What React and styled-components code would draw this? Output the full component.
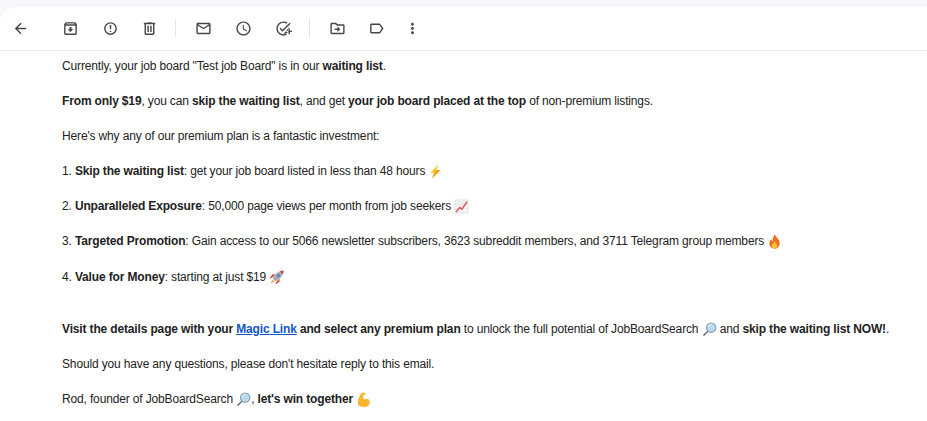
import React from 'react';
import styled, { createGlobalStyle } from 'styled-components';

const GlobalStyle = createGlobalStyle`
  html, body {
    margin: 0;
    background: #ffffff;
  }
`

const Page = styled.div`
  background: #f6f8fc;
  padding-top: 7px;
  height: 421px;
  box-sizing: border-box;
  overflow: hidden;
`
const Panel = styled.div`
  background: #ffffff;
  border-top-left-radius: 16px;
  height: 100%;
`
const Toolbar = styled.div`
  display: flex;
  align-items: center;
  height: 44px;
  padding-bottom: 1px;
  box-sizing: border-box;
  border-bottom: 1px solid #e9e9ea;
`
const IconButton = styled.div`
  width: 40px;
  height: 40px;
  display: flex;
  align-items: center;
  justify-content: center;
  flex: none;
  color: #444746;
  margin-left: ${(props) => props.$left || 0}px;
`
const Divider = styled.div`
  width: 1px;
  height: 20px;
  background: #e6e7e8;
  margin: 0 7px 0 6px;
  flex: none;
`
const Body = styled.div`
  padding: 8px 0 0 62px;
  font-family: "Liberation Sans", Arial, sans-serif;
  font-size: 12px;
  line-height: 15px;
  letter-spacing: -0.15px;
  color: #222222;
`
const Para = styled.p`
  margin: 0 0 ${(props) => props.$after || 20.1}px;
  white-space: nowrap;
`
const MagicLink = styled.a`
  color: #1155cc;
  text-decoration: underline;
`
const EmojiBox = styled.svg`
  width: 15px;
  height: 15px;
  margin: -3px 0;
  vertical-align: -1px;
`

const paths = {
  back: 'M20 11H7.83l5.59-5.59L12 4l-8 8 8 8 1.41-1.41L7.83 13H20v-2z',
  archive: 'M20.54 5.23l-1.39-1.68C18.88 3.21 18.47 3 18 3H6c-.47 0-.88.21-1.16.55L3.46 5.23C3.17 5.57 3 6.02 3 6.5V19c0 1.1.9 2 2 2h14c1.1 0 2-.9 2-2V6.5c0-.48-.17-.93-.46-1.27zM6.24 5h11.52l.81.97H5.44l.8-.97zM5 19V8h14v11H5zm8.45-9h-2.9v3H8l4 4 4-4h-2.55z',
  spam: 'M12 3a9 9 0 1 0 0 18 9 9 0 0 0 0-18zm0 2a7 7 0 1 1 0 14 7 7 0 0 1 0-14zM11 15h2v2h-2zM11 7h2v6h-2z',
  trash: 'M15 4V3H9v1H4v2h1v13c0 1.1.9 2 2 2h10c1.1 0 2-.9 2-2V6h1V4h-5zm2 15H7V6h10v13zM9 8h2v9H9zm4 0h2v9h-2z',
  mail: 'M20 4H4c-1.1 0-1.99.9-1.99 2L2 18c0 1.1.9 2 2 2h16c1.1 0 2-.9 2-2V6c0-1.1-.9-2-2-2zm0 14H4V8l8 5 8-5v10zm-8-7L4 6h16l-8 5z',
  clock: 'M11.99 2C6.47 2 2 6.48 2 12s4.47 10 9.99 10C17.52 22 22 17.52 22 12S17.52 2 11.99 2zM12 20c-4.42 0-8-3.58-8-8s3.58-8 8-8 8 3.58 8 8-3.58 8-8 8zm.5-13H11v6l5.25 3.15.75-1.23-4.5-2.67z',
  task: 'M22 5.18L10.59 16.6l-4.24-4.24 1.41-1.41 2.83 2.83 10-10L22 5.18zm-2.21 5.04c.13.57.21 1.17.21 1.78 0 4.42-3.58 8-8 8s-8-3.58-8-8 3.58-8 8-8c1.58 0 3.04.46 4.28 1.25l1.44-1.44C16.1 2.67 14.13 2 12 2 6.48 2 2 6.48 2 12s4.48 10 10 10c1.73 0 3.36-.44 4.78-1.22l-1.5-1.5c-1 .46-2.11.72-3.28.72zM19 15h-3v2h3v3h2v-3h3v-2h-3v-3h-2v3z',
  move: 'M20 6h-8l-2-2H4c-1.1 0-1.99.9-1.99 2L2 18c0 1.1.9 2 2 2h16c1.1 0 2-.9 2-2V8c0-1.1-.9-2-2-2zm0 12H4V6h5.17l2 2H20v10zm-8-4H8v-2h4V9l4 4-4 4v-3z',
  label: 'M17.63 5.84C17.27 5.33 16.67 5 16 5L5 5.01C3.9 5.01 3 5.9 3 7v10c0 1.1.9 1.99 2 1.99L16 19c.67 0 1.27-.33 1.63-.84L22 12l-4.37-6.16zM16 17H5V7h11l3.55 5L16 17z',
  more: 'M12 8c1.1 0 2-.9 2-2s-.9-2-2-2-2 .9-2 2 .9 2 2 2zm0 2c-1.1 0-2 .9-2 2s.9 2 2 2 2-.9 2-2-.9-2-2-2zm0 6c-1.1 0-2 .9-2 2s.9 2 2 2 2-.9 2-2-.9-2-2-2z',
}

function ToolIcon({ name, left }) {
  return (
    <IconButton $left={left}>
      <svg width="17" height="17" viewBox="0 0 24 24" fill="currentColor">
        <path d={paths[name]} />
      </svg>
    </IconButton>
  )
}

// 이모지 폰트가 없어서 직접 그림
function Zap() {
  return (
    <EmojiBox viewBox="0 0 16 16">
      <path d="M11 .5 2.500 9.300h4.200L4.300 15.500 13.500 6.300H8.800z" fill="#f8c62f" />
      <path d="M8.800 6.300h4.700L4.300 15.500 6.700 9.300z" fill="#f3a122" />
    </EmojiBox>
  )
}
function Chart() {
  return (
    <EmojiBox viewBox="0 0 16 16">
      <rect x="1" y="1" width="14" height="14" fill="#f1f3f4" stroke="#ced2d6" strokeWidth=".6" />
      <path d="M1 5.500h14M1 10h14M5.500 1v14M10 1v14" stroke="#dcdfe3" strokeWidth=".5" />
      <path d="M2 14 6 9l2.300 1.800L14 3" fill="none" stroke="#e0575c" strokeWidth="1.600" />
    </EmojiBox>
  )
}
function Fire() {
  return (
    <EmojiBox viewBox="0 0 16 16">
      <path d="M8.400 .3c.6 2.800 5.100 5.100 5.100 9.700 0 3.400-2.600 5.700-5.500 5.700S2.500 13.400 2.500 10.200c0-2.100 1.100-3.800 2.400-4.900 0 1.300.5 2.200 1.200 2.600C6 5.300 6.800 2.300 8.400.3z" fill="#f26c1d" />
      <path d="M8.200 7.500c.4 1.700 2.700 2.900 2.700 5.200 0 1.800-1.400 3-2.900 3s-2.900-1.200-2.900-3c0-2.100 2.500-3.100 3.100-5.200z" fill="#fbc02d" />
    </EmojiBox>
  )
}
function Rocket() {
  return (
    <EmojiBox viewBox="0 0 16 16">
      <path d="M3.500 8 .5 9.500l2.900-4.600 3.400-.4zM8 12.500 6.500 15.500l4.600-2.900.4-3.400z" fill="#d13f36" />
      <path d="M4 9.300C5.800 4.300 10 1 15.500.5 15 6 11.700 10.200 6.700 12z" fill="#a5aeb6" />
      <path d="M11.500 1.300 15.500.5c0 1.500-.3 2.900-.8 4.200z" fill="#d13f36" />
      <circle cx="10" cy="6" r="1.700" fill="#4f86c6" />
      <path d="M3.700 10.300 5.700 12.300 1.500 14.500z" fill="#f59e2c" />
    </EmojiBox>
  )
}
function Magnifier() {
  return (
    <EmojiBox viewBox="0 0 16 16">
      <path d="M6.800 8.600 1 13.800l1.200 1.200L7.600 9.600z" fill="#5f666b" />
      <circle cx="9.800" cy="6" r="5" fill="#b5dcf1" stroke="#939ca2" strokeWidth="1.200" />
      <path d="M6.800 5c.5-1.400 1.700-2.200 3.200-2.200" fill="none" stroke="#eef8fd" strokeWidth="1" />
    </EmojiBox>
  )
}
function Muscle() {
  return (
    <EmojiBox viewBox="0 0 16 16">
      <path d="M5.800 1 9.200.5l1.200 1.500-1.800 1.800-.9-.2c-.3 2 0 3.400.6 4.600 1.700-1.400 4.600-1.300 5.800.6 1.100 1.800.6 4.800-1.400 6.100-2.500 1.500-7.500 1.300-10-.5C.5 11.500 3 5 5.800 1z" fill="#f9b52d" />
      <path d="M8.200 8.200c.9.600 1.400 1.300 1.600 2.300" fill="none" stroke="#e28f16" strokeWidth=".8" />
    </EmojiBox>
  )
}

export default function App() {
  return (
    <>
      <GlobalStyle />
      <Page>
        <Panel>
          <Toolbar>
            <ToolIcon name="back" />
            <ToolIcon name="archive" left={10} />
            <ToolIcon name="spam" />
            <ToolIcon name="trash" left={-1} />
            <Divider />
            <ToolIcon name="mail" />
            <ToolIcon name="clock" />
            <ToolIcon name="task" />
            <Divider />
            <ToolIcon name="move" />
            <ToolIcon name="label" left={-1} />
            <ToolIcon name="more" left={-4} />
          </Toolbar>
          <Body>
            <Para>Currently, your job board "Test job Board" is in our <b>waiting list</b>.</Para>
            <Para><b>From only $19</b>, you can <b>skip the waiting list</b>, and get <b>your job board placed at the top</b> of non-premium listings.</Para>
            <Para>Here's why any of our premium plan is a fantastic investment:</Para>
            <Para>1. <b>Skip the waiting list</b>: get your job board listed in less than 48 hours <Zap /></Para>
            <Para>2. <b>Unparalleled Exposure</b>: 50,000 page views per month from job seekers <Chart /></Para>
            <Para>3. <b>Targeted Promotion</b>: Gain access to our 5066 newsletter subscribers, 3623 subreddit members, and 3711 Telegram group members <Fire /></Para>
            <Para $after={37}>4. <b>Value for Money</b>: starting at just $19 <Rocket /></Para>
            <Para><b>Visit the details page with your <MagicLink href="#">Magic Link</MagicLink> and select any premium plan</b> to unlock the full potential of JobBoardSearch <Magnifier /> and <b>skip the waiting list NOW!</b>.</Para>
            <Para>Should you have any questions, please don't hesitate reply to this email.</Para>
            <Para>Rod, founder of JobBoardSearch <Magnifier />, <b>let's win together</b> <Muscle /></Para>
          </Body>
        </Panel>
      </Page>
    </>
  )
}
